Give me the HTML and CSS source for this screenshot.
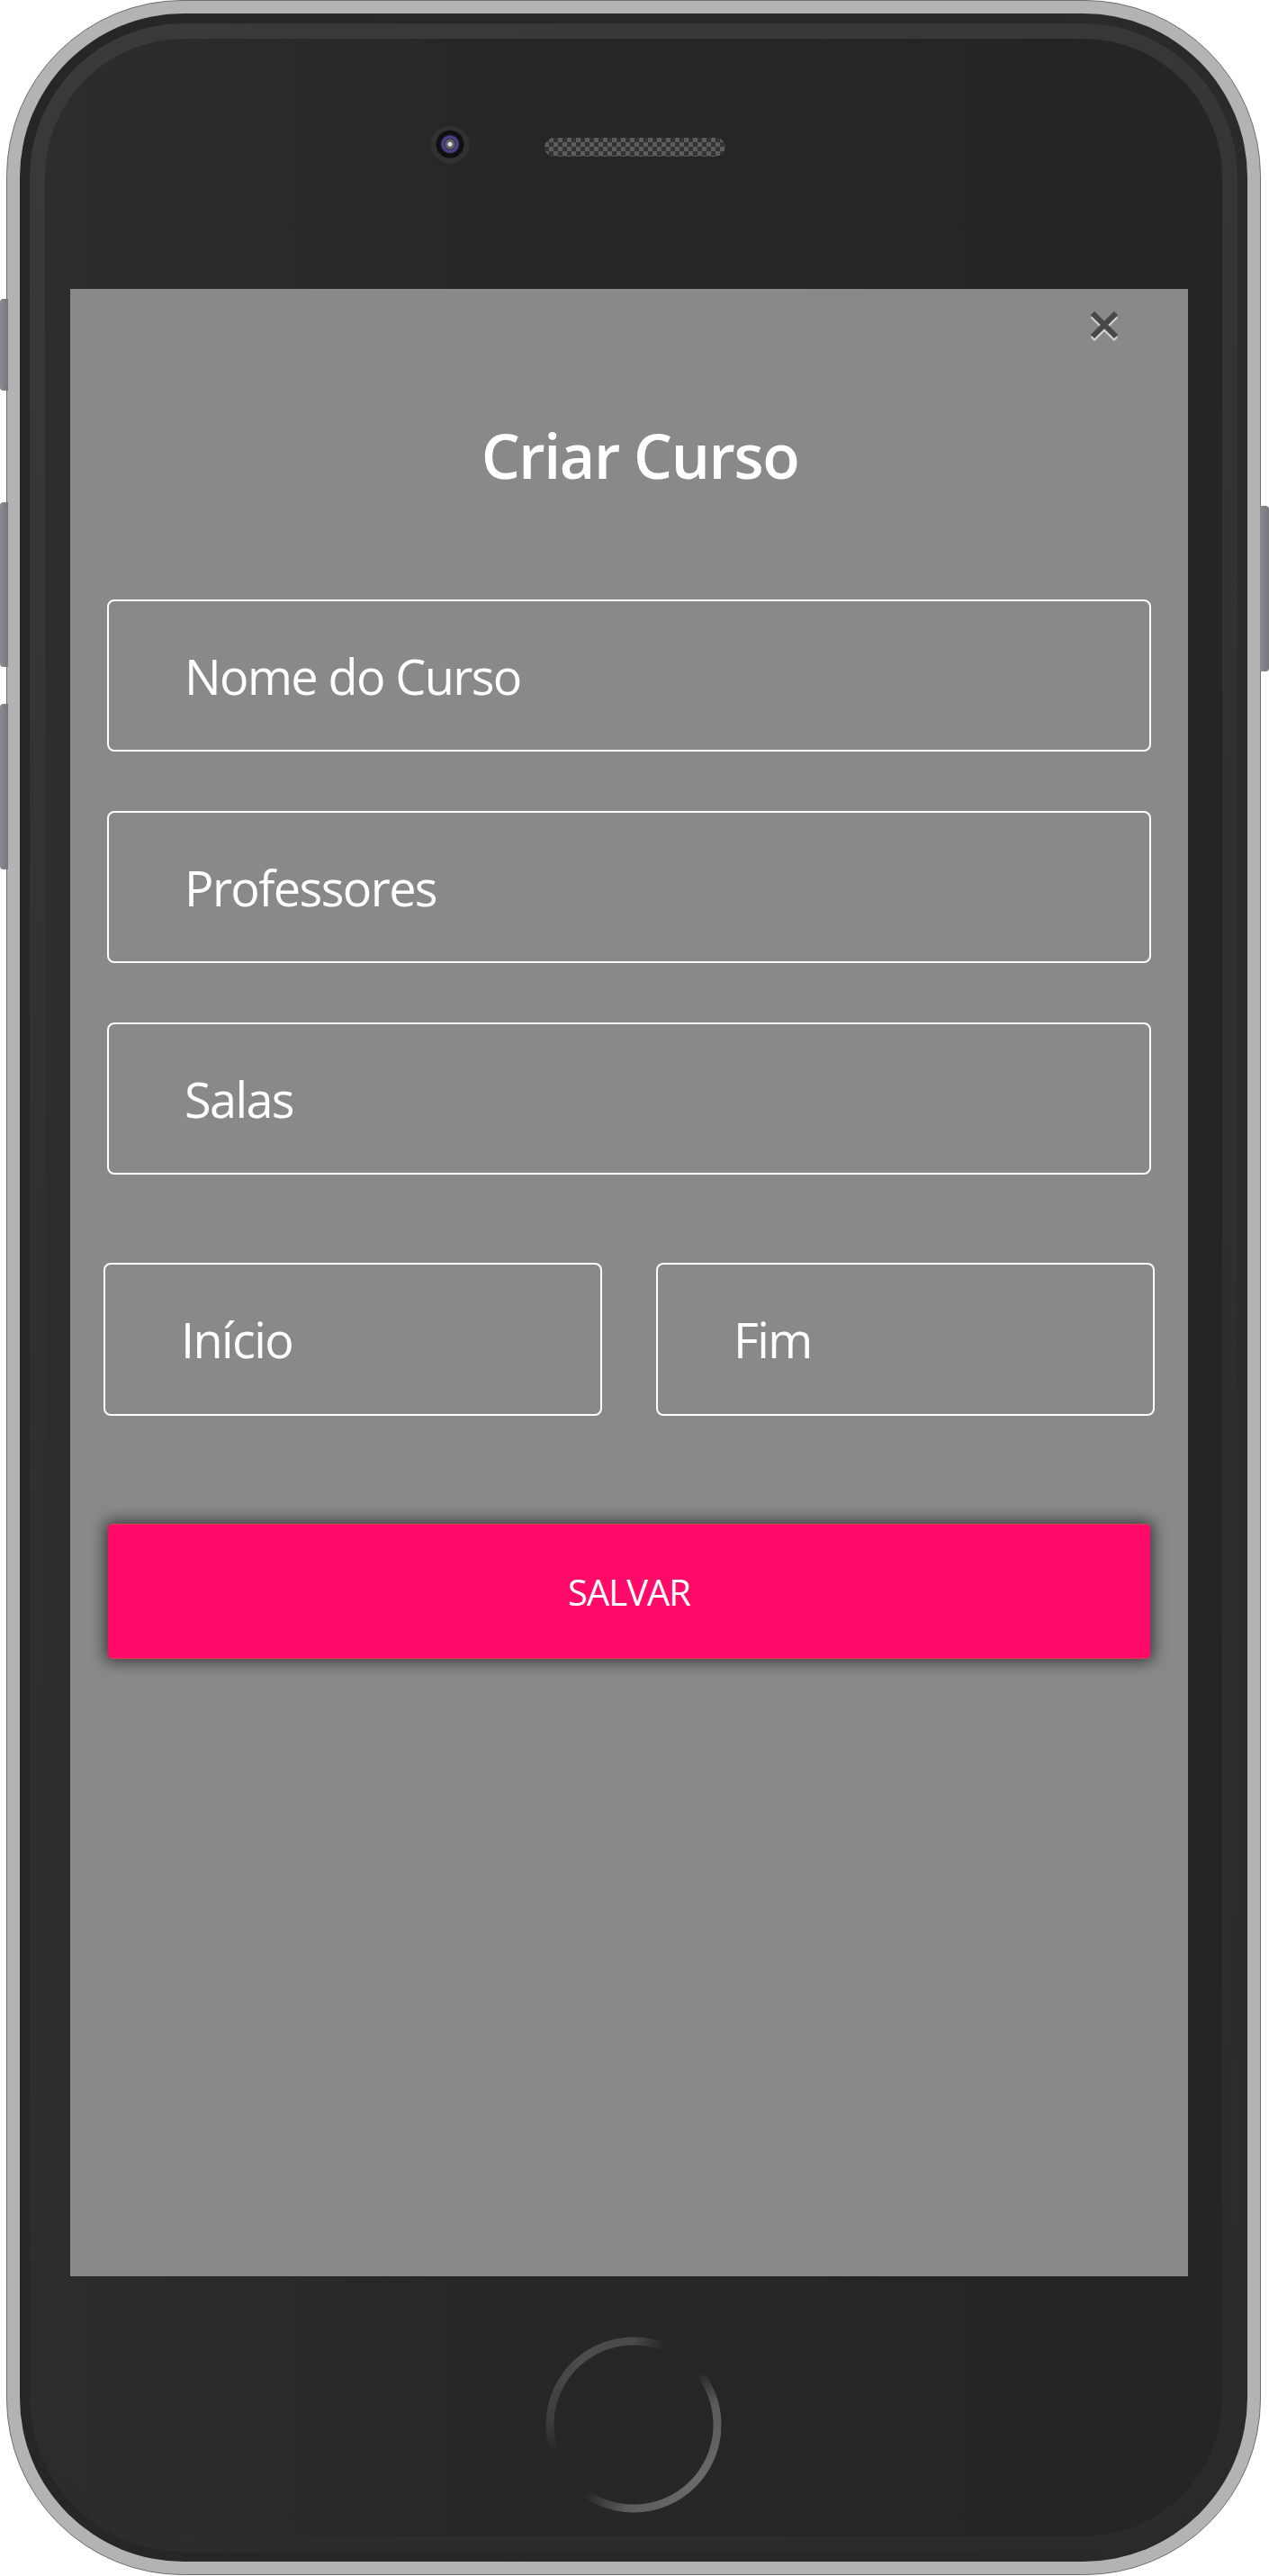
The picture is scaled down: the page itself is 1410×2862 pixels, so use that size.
FILE: index.html
```html
<!DOCTYPE html>
<html lang="pt-br">
<head>
    <meta charset="UTF-8">
    <meta name="viewport" content="width=device-width, initial-scale=1.0">
    <title>Criar Curso</title>
    <link rel="stylesheet" href="styles.css">
</head>
<body>

<div class="phone">
    <span class="side-btn side-left btn-mute"></span>
    <span class="side-btn side-left btn-vol-up"></span>
    <span class="side-btn side-left btn-vol-down"></span>
    <span class="side-btn side-right btn-power"></span>

    <div class="shell">
        <div class="bezel">
            <div class="face">
                <div class="sensors">
                    <span class="camera"></span>
                    <span class="speaker"></span>
                </div>

                <main class="screen">
                    <button class="close" title="Fechar">
                        <svg width="30" height="33" viewBox="0 0 30 33">
                            <g stroke="#d2d2d2" stroke-width="6">
                                <line x1="2" y1="5" x2="28" y2="31"/>
                                <line x1="28" y1="5" x2="2" y2="31"/>
                            </g>
                            <g stroke="#474747" stroke-width="6">
                                <line x1="2" y1="2" x2="28" y2="28"/>
                                <line x1="28" y1="2" x2="2" y2="28"/>
                            </g>
                        </svg>
                    </button>

                    <h2 class="title">Criar Curso</h2>

                    <form class="form" onsubmit="return false">
                        <input class="field" type="text" placeholder="Nome do Curso">
                        <input class="field" type="text" placeholder="Professores">
                        <input class="field" type="text" placeholder="Salas">
                        <div class="dates">
                            <input class="field" type="text" placeholder="Início">
                            <input class="field" type="text" placeholder="Fim">
                        </div>
                        <button class="button-save" type="submit">SALVAR</button>
                    </form>
                </main>

                <div class="home"></div>
            </div>
        </div>
    </div>
</div>

</body>
</html>
```

FILE: styles.css
```css
body {
    margin: 0;
    padding: 0;
    background-color: #ffffff;
    font-family: "Open Sans", "Noto Sans", sans-serif;
}

/* aparelho */
.phone {
    position: relative;
    box-sizing: border-box;
    width: 1394px;
    height: 2861px;
    margin-left: 7px;
    padding: 14px;
    background-color: #b3b3b3;
    border: 1.5px solid #6f6f6f;
    border-radius: 196px;
}
.side-btn {
    position: absolute;
    width: 9px;
    background: linear-gradient(90deg, #8a898f, #77767c);
}
.side-left {
    left: -8px;
    border-radius: 4px 0 0 4px;
}
.side-right {
    right: -10px;
    width: 10px;
    border-radius: 0 4px 4px 0;
}
.btn-mute {
    top: 331px;
    height: 102px;
}
.btn-vol-up {
    top: 557px;
    height: 183px;
}
.btn-vol-down {
    top: 781px;
    height: 184px;
}
.btn-power {
    top: 561px;
    height: 184px;
}
.shell {
    height: 100%;
    box-sizing: border-box;
    padding: 11px;
    background: linear-gradient(90deg, #262626, #2a2a2a);
    border-radius: 182px;
}
.bezel {
    height: 100%;
    box-sizing: border-box;
    padding: 17px;
    background: linear-gradient(160deg, #3a3a3a, #303030 40%, #2b2b2b);
    border-radius: 171px;
}
.face {
    height: 100%;
    display: flex;
    flex-direction: column;
    background: linear-gradient(90deg, #2d2d2d 0%, #272727 35%, #252525 100%);
    border-radius: 154px;
}

/* camera e alto-falante */
.sensors {
    height: 278px;
    flex-shrink: 0;
    box-sizing: border-box;
    display: flex;
    align-items: flex-start;
    padding: 97px 0 0 428px;
}
.camera {
    width: 44px;
    height: 44px;
    border-radius: 50%;
    background: radial-gradient(circle at 50% 46%, #e0e0e4 0 2px, #62626e 3px 5px, #2b2b36 6px, #4f3f88 7px 9px, #2a2340 10px, #101014 11px 15px, #313131 16px 21px, transparent 22px);
}
.speaker {
    width: 201px;
    height: 21px;
    margin: 13px 0 0 83px;
    border-radius: 11px;
    background-color: #2f2f2f;
    background-image: conic-gradient(#5c5c5c 25%, #333333 0 50%, #5c5c5c 0 75%, #333333 0);
    background-size: 10px 10px;
    box-shadow: 0 0 3px 2px #262626;
}

/* tela */
.screen {
    width: 1242px;
    height: 2208px;
    flex-shrink: 0;
    margin-left: 28px;
    display: flex;
    flex-direction: column;
    background-color: #898989;
}
.close {
    align-self: flex-end;
    width: 30px;
    height: 33px;
    margin: 25px 78px 0 0;
    padding: 0;
    border: none;
    background: none;
    cursor: pointer;
}
.close svg {
    display: block;
}
.title {
    margin: 87px 0 0;
    padding-left: 24px;
    color: #ffffff;
    font-size: 68px;
    font-weight: 600;
    line-height: 80px;
    letter-spacing: -1.4px;
    text-align: center;
}
.form {
    display: flex;
    flex-direction: column;
    padding: 0 41px;
    margin-top: 120px;
}
.field {
    box-sizing: border-box;
    width: 100%;
    height: 169px;
    margin: 0 0 66px;
    padding: 0 0 0 84px;
    background: transparent;
    border: 2px solid #ffffff;
    border-radius: 8px;
    color: #ffffff;
    font-family: "Open Sans", "Noto Sans", sans-serif;
    font-size: 54px;
    letter-spacing: -1.6px;
    outline: none;
}
.field::placeholder {
    color: #ffffff;
    opacity: 1;
}
.dates {
    display: grid;
    grid-template-columns: 1fr 1fr;
    gap: 60px;
    margin: 32px -4px 0;
}
.dates .field {
    height: 170px;
    margin: 0;
}
.button-save {
    height: 150px;
    margin: 120px 1px 0;
    background-color: #ff0a68;
    border: none;
    border-top: 1px solid #e8384f;
    border-bottom: 1px solid #e8384f;
    border-radius: 5px;
    box-shadow: 0 0 16px 4px rgba(0, 0, 0, 0.55);
    color: #ffffff;
    font-family: "Open Sans", "Noto Sans", sans-serif;
    font-size: 40px;
    letter-spacing: -1px;
    cursor: pointer;
}

/* botao home */
.home {
    align-self: center;
    flex-shrink: 0;
    width: 196px;
    height: 196px;
    margin-top: 67px;
    border-radius: 50%;
    background: conic-gradient(#4a4a4a 0deg, rgba(74, 74, 74, 0) 22deg, rgba(90, 90, 90, 0) 52deg, #5a5a5a 75deg, #6a6a6a 130deg, #5c5c5c 185deg, rgba(80, 80, 80, 0) 215deg, rgba(60, 60, 60, 0) 250deg, #3c3c3c 272deg, #4c4c4c 320deg, #4a4a4a 360deg);
    -webkit-mask: radial-gradient(circle, transparent 88px, #000 89px 97px, transparent 98px);
    mask: radial-gradient(circle, transparent 88px, #000 89px 97px, transparent 98px);
}
```
